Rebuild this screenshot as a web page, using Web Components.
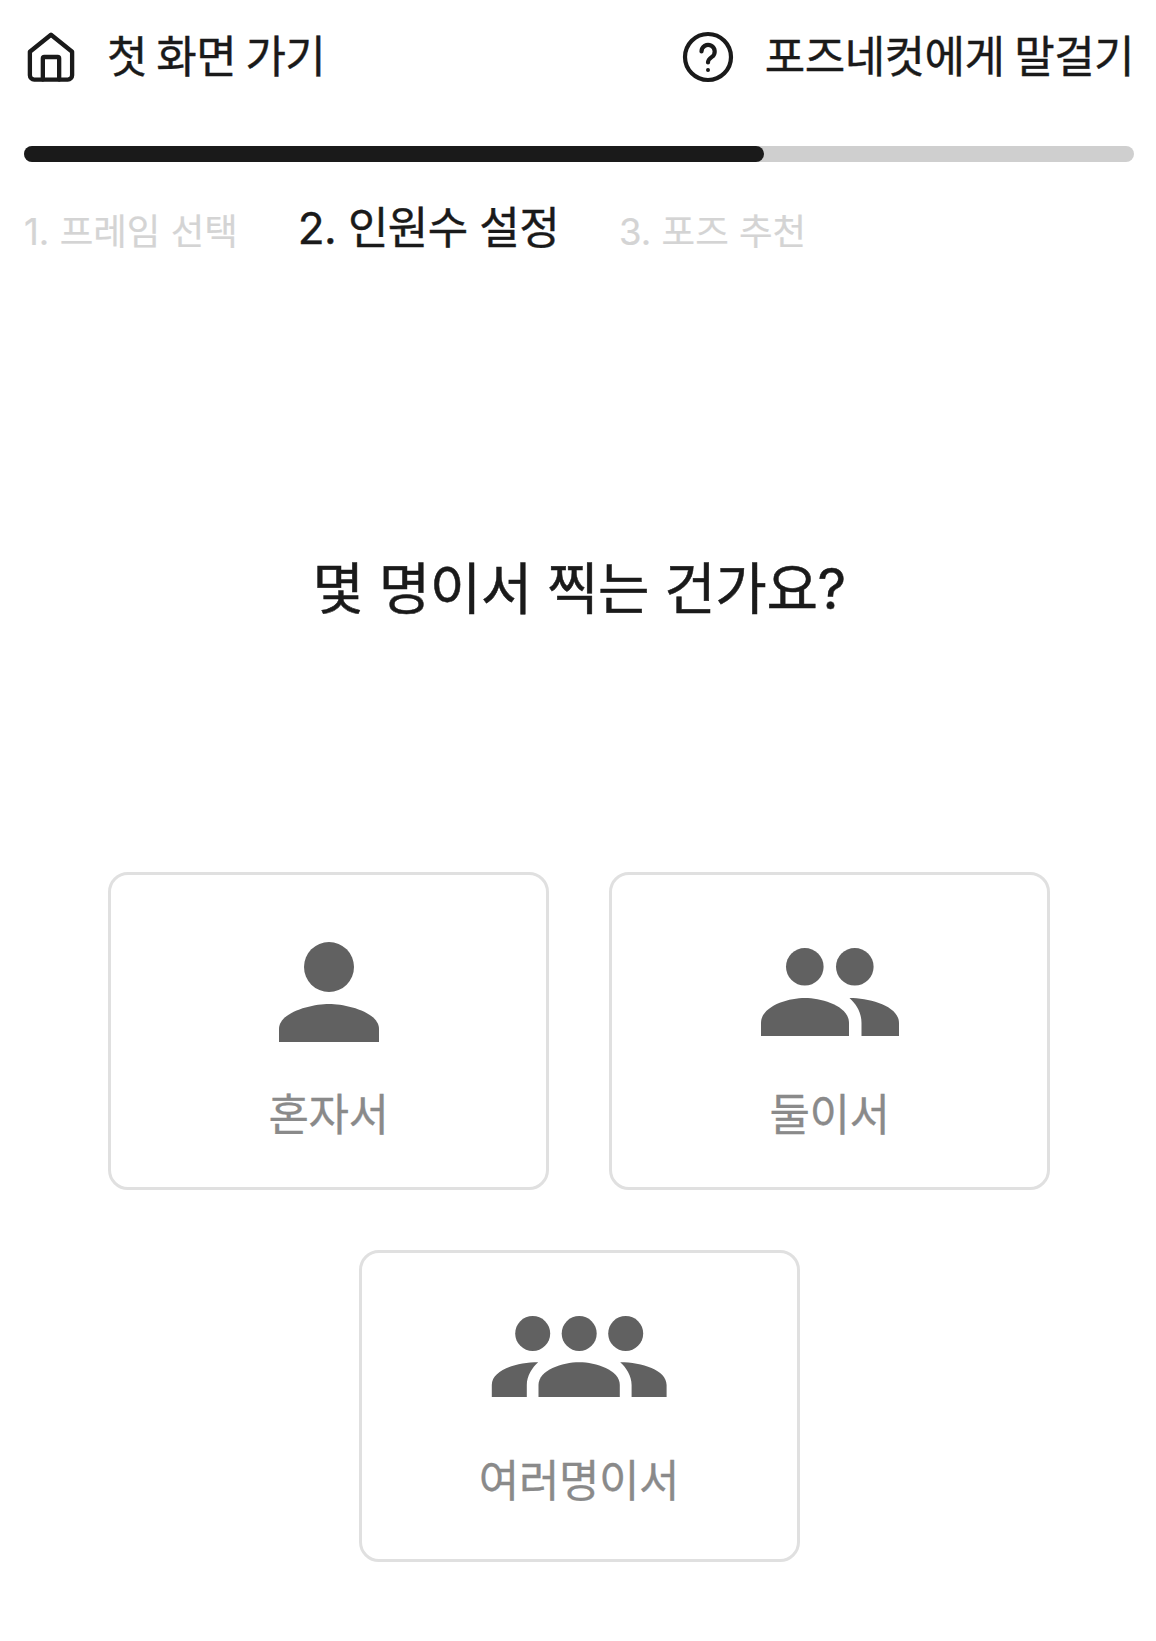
<!DOCTYPE html>
<html lang="ko">
<head>
<meta charset="utf-8">
<title>인원수 설정</title>
<style>
html,body{margin:0;padding:0;background:#fff}
body{font-family:Inter,"Noto Sans CJK KR",sans-serif;color:#1a1a1a}
</style>
</head>
<body>
<pose-page>
  <top-nav></top-nav>
  <progress-track value="66.67"></progress-track>
  <step-list></step-list>
  <page-title>몇 명이서 찍는 건가요?</page-title>
  <choice-grid>
    <choice-card kind="one" style="--h:318px;--pt:42px;--gap:18px">혼자서</choice-card>
    <choice-card kind="two" style="--h:318px;--pt:42px;--gap:18px">둘이서</choice-card>
    <choice-card kind="many" style="--h:312px">여러명이서</choice-card>
  </choice-grid>
</pose-page>
<script>
const def=(name,html,init)=>customElements.define(name,class extends HTMLElement{
  constructor(){super();this.attachShadow({mode:'open'}).innerHTML=html;}
  connectedCallback(){init&&init(this);}
});
def('pose-page',`<style>:host{display:block;box-sizing:border-box;width:1156px;height:1641px;padding:30px 22px 0 24px;background:#fff;overflow:hidden}</style><slot></slot>`);
def('top-nav',`<style>
:host{display:flex;justify-content:space-between;align-items:center;height:54px;padding-left:3px;font-size:44px;letter-spacing:-.55px;-webkit-text-stroke:.4px #1a1a1a;line-height:52px;color:#1a1a1a}
.i{display:flex;align-items:center}
svg{display:block;flex:none}
.home{gap:32px;word-spacing:-2.5px}.help{gap:31px;word-spacing:-2px}
</style>
<div class="i home"><svg width="48" height="50" viewBox="0 0 50 52" fill="none" stroke="#1a1a1a" stroke-width="4.5" stroke-linejoin="round" stroke-linecap="round"><path d="M3 20.5 25 2.8 47 20.5V45a4.5 4.5 0 0 1-4.5 4.5h-35A4.5 4.5 0 0 1 3 45Z"/><path d="M16.5 49.5V27.5a1.5 1.5 0 0 1 1.5-1.5h14a1.5 1.5 0 0 1 1.5 1.5v22"/></svg><span>첫 화면 가기</span></div>
<div class="i help"><svg width="52" height="52" viewBox="0 0 52 52" fill="none" stroke="#1a1a1a" stroke-width="4.2" stroke-linecap="round"><circle cx="26" cy="26" r="23"/><path d="M19.5 20.5a6.6 6.6 0 1 1 10.4 5.4c-2.4 1.7-3.9 2.9-3.9 5.6"/><circle cx="26" cy="39" r="1.2" fill="#1a1a1a" stroke-width="1.6"/></svg><span>포즈네컷에게 말걸기</span></div>`);
def('progress-track',`<style>
:host{display:block;height:16px;margin-top:62px;border-radius:8px;background:#cfcfcf}
.b{height:100%;width:66.67%;border-radius:8px;background:#1a1a1a}
</style><div class="b"></div>`);
def('step-list',`<style>
:host{display:flex;align-items:flex-start;gap:60px;margin-top:36px;height:60px;line-height:60px;font-size:36.5px;color:#d4d4d4;-webkit-text-stroke:.2px #d4d4d4}
.off{margin-top:4px}
.on{font-size:44px;letter-spacing:-.6px;color:#1a1a1a;-webkit-text-stroke:.4px #1a1a1a}
</style><span class="off">1. 프레임 선택</span><span class="on">2. 인원수 설정</span><span class="off">3. 포즈 추천</span>`);
def('page-title',`<style>
:host{display:block;margin-top:291px;text-align:center;font-size:56px;letter-spacing:-.5px;-webkit-text-stroke:.5px #1a1a1a;line-height:80px;color:#1a1a1a}
</style><slot></slot>`);
def('choice-grid',`<style>
:host{display:flex;flex-wrap:wrap;justify-content:center;gap:60px;margin-top:243px}
</style><slot></slot>`);
const ICONS={
 one:`<circle cx="75" cy="50" r="25"/><path d="M25 125V112C25 95 58 87 75 87S125 95 125 112V125Z"/>`,
 two:`<g transform="translate(6 31)"><circle cx="43.8" cy="18.8" r="18.8"/><circle cx="93.8" cy="18.8" r="18.8"/><path d="M0 88V75C0 58 27 50 44 50S88 58 88 75V88Z"/><path d="M88.5 50C109 50 138 58 138 75V88H100.5V75C100.5 65 96 57 88.5 50Z"/></g>`,
 many:`<g transform="translate(.5 20)"><circle cx="41.2" cy="17.5" r="17.5"/><circle cx="87.7" cy="17.5" r="17.5"/><circle cx="134.2" cy="17.5" r="17.5"/><path d="M47 81V69C47 54 71 46.3 87.7 46.3S128.3 54 128.3 69V81Z"/><path d="M46.7 46.3C41 51 35.3 60 35.3 69V81H.3V69C.3 54 25 46.3 46.7 46.3Z"/><path d="M128.7 46.3C134.4 51 140.1 60 140.1 69V81H175.1V69C175.1 54 150.4 46.3 128.7 46.3Z"/></g>`
};
def('choice-card',`<style>
:host{display:block;box-sizing:border-box;width:441px;height:var(--h,318px);border:3px solid #e0e0e0;border-radius:20px;background:#fff;padding-top:var(--pt,43px);text-align:center;color:#8a8a8a;font-size:44px;letter-spacing:-.4px;-webkit-text-stroke:.3px #8a8a8a;line-height:60px}
svg{display:block;margin:0 auto;fill:#616161}
.l{margin-top:var(--gap,17px)}
</style><svg id="s" width="176" height="150"></svg><div class="l"><slot></slot></div>`,el=>{
  const k=el.getAttribute('kind'),s=el.shadowRoot.getElementById('s');
  const w=k==='many'?176:150,h=k==='many'?138:150;
  s.setAttribute('width',w);s.setAttribute('height',h);s.setAttribute('viewBox',`0 0 ${w} ${h}`);
  s.innerHTML=ICONS[k];
});
</script>
</body>
</html>
